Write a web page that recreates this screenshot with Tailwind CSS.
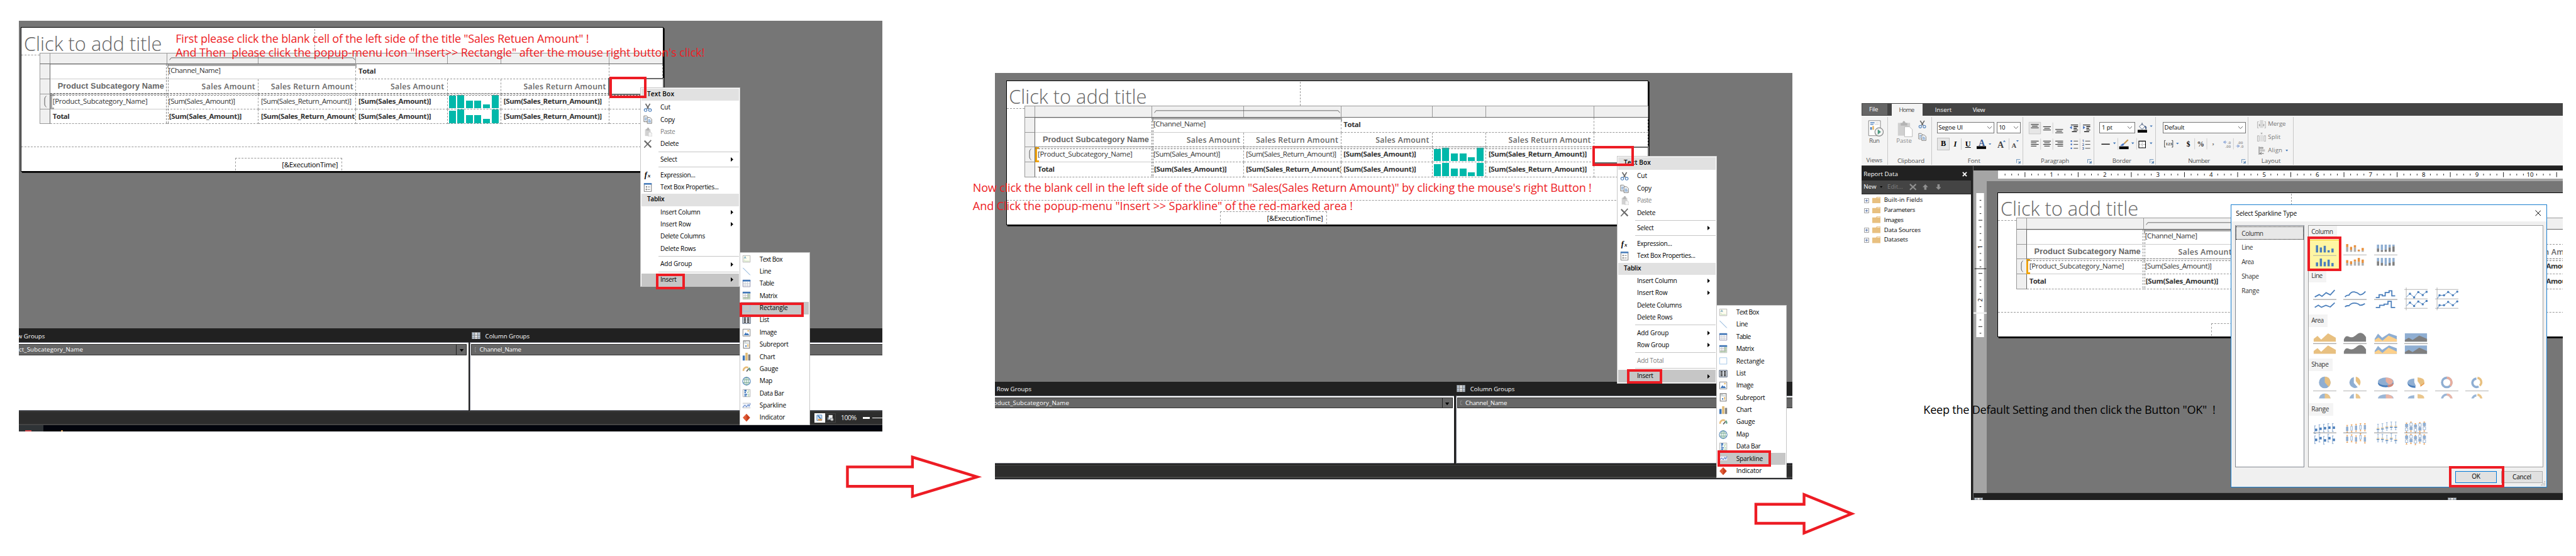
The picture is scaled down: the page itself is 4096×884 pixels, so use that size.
<!DOCTYPE html>
<html lang="en">
<head>
<meta charset="utf-8">
<title>Report Builder sparkline steps</title>
<script src="https://cdn.jsdelivr.net/npm/@tailwindcss/browser@4"></script>
</head>
<body class="bg-white overflow-hidden">
<svg class="hidden">
  <symbol id="i-cut" viewBox="0 0 16 16"><path d="M4 1l5.500 9M12 1L6.500 10" stroke="#696969" stroke-width="2" fill="none"/><circle cx="4" cy="12.500" r="2.500" fill="none" stroke="#4a7ebb" stroke-width="1.300"/><circle cx="12" cy="12.500" r="2.500" fill="none" stroke="#4a7ebb" stroke-width="1.300"/></symbol>
  <symbol id="i-copy" viewBox="0 0 16 16"><path d="M1 1.500h5l2.500 2.500v8H1z" fill="#fff" stroke="#696969"/><path d="M2.500 5h4M2.500 7h3M2.500 9h3" stroke="#4a7ebb"/><path d="M7 4.500h5l3 3v7.500H7z" fill="#fff" stroke="#696969"/><path d="M8.500 8.500h4M8.500 10.500h5M8.500 12.500h5" stroke="#4a7ebb"/></symbol>
  <symbol id="i-paste" viewBox="0 0 16 16"><path d="M3 3h10v12H3z" fill="#d2d2d2"/><path d="M5 2h2V0h3v2h1v3H5z" fill="#b4b4b4"/><path d="M9 8h4l3 3v5H9z" fill="#f4f4f4" stroke="#c4c4c4"/></symbol>
  <symbol id="i-del" viewBox="0 0 16 16"><path d="M2 2l12 12" stroke="#696969" stroke-width="2.600"/><path d="M14 1L1.500 14.500" stroke="#696969" stroke-width="1.800"/></symbol>
  <symbol id="i-fx" viewBox="0 0 16 16"><text x="2" y="12" font-family="Liberation Serif, serif" font-style="italic" font-weight="700" font-size="14">f</text><text x="8" y="13" font-family="Liberation Serif, serif" font-style="italic" font-weight="700" font-size="10">x</text></symbol>
  <symbol id="i-prop" viewBox="0 0 16 16"><path d="M1.500 1h13v14.500h-13z" fill="#fff" stroke="#696969"/><path d="M1 0h14v3H1z" fill="#4a7ebb"/><circle cx="5.500" cy="7" r="1.200" fill="#696969"/><circle cx="5.500" cy="11.500" r="1.100" fill="none" stroke="#696969"/><path d="M8 7h4M8 11.500h4" stroke="#696969"/></symbol>
  <symbol id="i-tb" viewBox="0 0 16 16"><path d="M1.500 1.500h13v12h-13z" fill="#fffdf0" stroke="#b0b0b0"/><path d="M3.500 7l1.800-4 1.800 4M4 5.700h2.500" stroke="#5b9ab5" fill="none" stroke-width=".9"/><path d="M3 9.500h2M3 11.500h10" stroke="#b8d8b0"/></symbol>
  <symbol id="i-line" viewBox="0 0 16 16"><path d="M1.500 1l13 13" stroke="#6fa0d0" stroke-width="1.100"/></symbol>
  <symbol id="i-table" viewBox="0 0 16 16"><path d="M1.500 1.500h13v12h-13z" fill="#fff" stroke="#8a8aa8"/><path d="M1 1h14v3H1z" fill="#3f76b8"/><path d="M2 7.500h12M2 10.500h12M5.500 4v9M9.500 4v9" stroke="#c0c4cc" stroke-width=".9"/></symbol>
  <symbol id="i-matrix" viewBox="0 0 16 16"><path d="M1.500 1.500h13v13h-13z" fill="#fff" stroke="#bbb"/><path d="M10 4h4v10h-4zM2 11h12v3H2z" fill="#bcd8b6"/><path d="M1 1h14v3H1z" fill="#3f76b8"/><path d="M2 7.500h12M2 11h12M5.500 4v10M10 4v10" stroke="#b0b0b0" stroke-width=".9"/></symbol>
  <symbol id="i-rect" viewBox="0 0 16 16"><path d="M1.500 2h13v11.500h-13z" fill="none" stroke="#9cc3e6"/></symbol>
  <symbol id="i-list" viewBox="0 0 16 16"><path d="M1 2h14v12H1z" fill="#eef3fa" stroke="#3a4a63"/><path d="M3 4h4M3 6h4M3 8h4M3 10h4M3 12h4M9 4h4M9 6h4M9 8h4M9 10h4M9 12h4" stroke="#000" stroke-width="1.200"/></symbol>
  <symbol id="i-image" viewBox="0 0 16 16"><path d="M1.500 1.500h13v12.500h-13z" fill="#fff" stroke="#777"/><path d="M3 12.500l3.500-5 2 2.500 1.500-1.500 3 4z" fill="#3f76b8"/><circle cx="11" cy="4.500" r="1.500" fill="#e5b765"/></symbol>
  <symbol id="i-sub" viewBox="0 0 16 16"><path d="M2.500 1h11v13.500h-11z" fill="#fff" stroke="#777" stroke-width="1.200"/><path d="M4 3h3M4 5h8" stroke="#9aa" /><path d="M6 9h2v3H6z" fill="#3f76b8"/><path d="M9.500 7h2v5h-2z" fill="#e5b765"/></symbol>
  <symbol id="i-chart" viewBox="0 0 16 16"><path d="M1 6h4v9H1z" fill="#3f76b8"/><path d="M6 1h4v14H6z" fill="#dfba74"/><path d="M11 4h4v11h-4z" fill="#808080"/></symbol>
  <symbol id="i-gauge" viewBox="0 0 16 16"><path d="M2.500 11a5.500 5.500 0 0 1 8.500-5.500" fill="none" stroke="#e8bd78" stroke-width="3"/><path d="M12.500 5.500q2 2 1.500 5.500" fill="none" stroke="#5fa287" stroke-width="2.500"/><path d="M8 12l4-5" stroke="#555" stroke-width="1.800"/></symbol>
  <symbol id="i-map" viewBox="0 0 16 16"><circle cx="8" cy="8" r="7" fill="#fff" stroke="#4a7ebb" stroke-width="1.200"/><path d="M1.500 5.500h13M1.500 10.500h13M8 1v14" stroke="#69a28a" fill="none"/><ellipse cx="8" cy="8" rx="3.500" ry="7" fill="none" stroke="#69a28a"/></symbol>
  <symbol id="i-bar" viewBox="0 0 16 16"><path d="M1.500 1.500h13v13h-13z" fill="#fff" stroke="#aaa"/><path d="M4 2h4v3H4zM4 6h3v2H4zM4 9h5v2H4zM4 12h4v2H4z" fill="#3f76b8"/><path d="M10 3h3v2h-3zM9 6h3v2H9zM10 9h3v2h-3zM10 12h3v2h-3z" fill="#b9d4b2"/></symbol>
  <symbol id="i-spark" viewBox="0 0 16 16"><path d="M1 3.500h14v8.500H1z" fill="#eef3fb"/><path d="M1 3.500h14M1 12h14" stroke="#bbb"/><path d="M1 11l4-4 3 3 3-4 1.500 3L15 4" fill="none" stroke="#5b7fc4" stroke-width="1.200"/></symbol>
  <symbol id="i-ind" viewBox="0 0 16 16"><path d="M8 1l6.500 7L8 15 1.500 8z" fill="#c8401f"/><path d="M8 1v14L1.500 8z" fill="#e05a35"/></symbol>
  <symbol id="i-grid" viewBox="0 0 16 13"><path d="M0 0h16v13H0z" fill="#777"/><path d="M1 1h4v2H1zM1 4h4v2H1zM1 7h4v2H1zM1 10h4v2H1zM11 1h4v2h-4zM11 4h4v2h-4zM11 7h4v2h-4zM11 10h4v2h-4z" fill="#c5d6e8"/><path d="M6 1h4v2H6zM6 4h4v2H6zM6 7h4v2H6zM6 10h4v2H6z" fill="#fff"/></symbol>
  <symbol id="i-launch" viewBox="0 0 8 8"><path d="M.5 7V.500H7" fill="none" stroke="#5a86b4"/><path d="M3 3l3 3M7.500 3.500v4h-4z" fill="#5a86b4" stroke="#5a86b4" stroke-width=".8"/></symbol>
</svg>

<main id="board" class="relative w-[4650px] h-[1004px] [zoom:0.88086] bg-white overflow-hidden font-['Open_Sans','Noto_Sans',sans-serif] text-[11.500px] text-black whitespace-nowrap">

  <!-- Step 1 -->
  <section class="absolute left-[34px] top-[38px] w-[1559px] h-[741px] overflow-hidden flex flex-col bg-[#767676]">
    <div class="h-[555px] shrink-0 pl-[4px] pt-[11px]" data-surface="gray"></div>
    <div data-groups="one"></div>
  </section>

  <!-- Step 2 -->
  <section class="absolute left-[1796px] top-[132px] w-[1439px] h-[733px] overflow-hidden flex flex-col bg-[#767676]">
    <div class="h-[557px] shrink-0 pl-[20px] pt-[13px]" data-surface="orange"></div>
    <div data-groups="two"></div>
  </section>

  <!-- Step 3 -->
  <section class="absolute left-[3360px] top-[186px] w-[1266px] h-[716px] overflow-hidden flex flex-col bg-white">
    <nav class="h-[23px] shrink-0 bg-[#444] flex items-end text-white leading-[22px] text-[11px]">
      <span class="w-[46px] h-[21px] mb-px ml-px bg-[#666] pl-[13px] leading-[20px]"><b class="font-normal" data-w="16">File</b></span>
      <span class="ml-[8px] w-[56px] h-[22px] bg-[#f4f4f4] text-[#444] pl-[13px]"><b class="font-normal" data-w="27">Home</b></span>
      <span class="ml-[22px]"><b class="font-normal" data-w="30">Insert</b></span>
      <span class="ml-[38px]"><b class="font-normal" data-w="22">View</b></span>
    </nav>
    <div class="h-[91px] shrink-0 bg-[#f4f4f4] border-b border-[#444] flex text-[11px] text-[#555] pt-[2px]">
      <div class="w-[48px] h-[87px] border-r border-[#c8c8c8] flex flex-col items-center">
        <svg class="w-[29px] h-[31px] mt-[6px] ml-[5px]" viewBox="0 0 29 31"><path d="M1 1h22v28H1z" fill="#fff" stroke="#777"/><path d="M4 5h8M4 8h6" stroke="#4a7ebb" stroke-width="1.500"/><path d="M14 5h6M12 8h8" stroke="#c8c8c8"/><path d="M4 13h3v5H4z" fill="#4a7ebb"/><path d="M8 11h3v7H8z" fill="#e5b765"/><circle cx="20.500" cy="22" r="7.800" fill="#f4f4f4" stroke="#8a8a8a" stroke-width="1.400"/><path d="M18 17l6 5-6 5z" fill="#4d9a80"/></svg>
        <span class="leading-[14px] mt-px" data-w="19">Run</span>
        <span class="leading-[16px] mt-[20px]" data-w="29">Views</span>
      </div>
      <div class="w-[79px] h-[87px] border-r border-[#c8c8c8]">
        <div class="flex h-[52px] pl-[16px] pt-[6px]">
          <div class="w-[32px]"><svg class="w-[30px] h-[31px]" viewBox="0 0 30 31"><path d="M2 5h22v23H2z" fill="#d0d0d0"/><path d="M7 5h3q2.500-7 6 0h3v5H7z" fill="#b4b4b4"/><path d="M14 12h9l5 5v13H14z" fill="#fff" stroke="#b4b4b4"/></svg>
            <div class="leading-[14px] text-[#8a8a8a] -ml-px"><span data-w="28">Paste</span></div></div>
          <div class="flex flex-col gap-[8px] pl-[7px]"><svg class="w-[15px] h-[15px]"><use href="#i-cut"/></svg><svg class="w-[15px] h-[15px]"><use href="#i-copy"/></svg></div>
        </div>
        <div class="leading-[16px] mt-[20px] pl-[17px]"><span data-w="49">Clipboard</span></div>
      </div>
      <div class="w-[165px] h-[87px] border-r border-[#c8c8c8] pl-[10px] text-black">
        <div class="flex gap-[4px] pt-[9px]">
          <div class="w-[103px] h-[21px] border border-[#777] bg-white flex items-center justify-between px-px pr-[4px]"><span data-w="44">Segoe UI</span><svg class="w-[8px] h-[5px]" viewBox="0 0 8 5"><path d="M0 0l4 4 4-4" fill="none" stroke="#555"/></svg></div>
          <div class="w-[44px] h-[21px] border border-[#777] bg-white flex items-center justify-between pl-[3px] pr-[4px]"><span data-w="11">10</span><svg class="w-[8px] h-[5px]" viewBox="0 0 8 5"><path d="M0 0l4 4 4-4" fill="none" stroke="#555"/></svg></div>
        </div>
        <div class="flex items-center h-[22px] mt-[8px] font-['Liberation_Serif',serif] font-bold text-[14px]">
          <span class="w-[22px] h-[22px] border border-[#c0c0c0] bg-[#e6e6e6] text-center leading-[20px]">B</span>
          <span class="w-[21px] text-center italic">I</span>
          <span class="w-[24px] border-l border-[#c8c8c8] text-center underline">U</span>
          <svg class="w-[18px] h-[18px] ml-[4px]" viewBox="0 0 18 18"><text x="3.500" y="12" font-size="16" font-weight="700" fill="#3f5f95">A</text><path d="M0 13h17v5H0z"/></svg>
          <svg class="w-[5px] h-[3px] ml-[4px]" viewBox="0 0 6 4"><path d="M0 0h6L3 4z" fill="#4a7ebb"/></svg>
          <svg class="w-[16px] h-[16px] ml-[11px]" viewBox="0 0 16 16"><text x="0" y="15" font-size="16" font-weight="700" fill="#444">A</text><path d="M10 4l2.500-3L15 4z" fill="#3f76b8"/></svg>
          <svg class="w-[20px] h-[20px] ml-[4px] border-l border-[#c8c8c8] pl-[4px]" viewBox="0 0 16 16"><text x="0" y="16" font-size="13" font-weight="700" fill="#444">A</text><path d="M9 1h5l-2.500 3z" fill="#3f76b8"/></svg>
        </div>
        <div class="flex justify-between items-center leading-[16px] mt-[12px] pl-[55px] pr-[3px] text-[#555]"><span data-w="23">Font</span><svg class="w-[8px] h-[8px]"><use href="#i-launch"/></svg></div>
      </div>
      <div class="w-[128px] h-[87px] border-r border-[#c8c8c8]">
        <svg class="block w-[128px] h-[72px]" viewBox="0 0 128 72" fill="none">
          <path d="M10.500 9.500h21v21h-21z" fill="#e6e6e6" stroke="#c4c4c4"/>
          <path d="M53.500 10v20M31.500 39v20M53.500 39v20M102.500 10v20M102.500 39v20" stroke="#c8c8c8"/>
          <path d="M14 13.500h14M16 16.500h10M14 19.500h14M36 17.500h14M38 20.500h10M36 23.500h14M58 22.500h14M60 25.500h10M58 28.500h14" stroke="#000"/>
          <path d="M14 43.500h14M14 46.500h10M14 49.500h14M14 52.500h10M36 43.500h14M38 46.500h10M36 49.500h14M38 52.500h10M58 43.500h14M62 46.500h10M58 49.500h14M62 52.500h10" stroke="#000"/>
          <path d="M86 14.500h13M91 17.500h8M91 20.500h6M91 23.500h8M88 26.500h9M108 14.500h13M114 17.500h7M114 20.500h5M114 23.500h7M110 26.500h9" stroke="#000" stroke-width="1.300"/>
          <path d="M84 19l4-3v6zM112 19l-4-3v6z" fill="#4472c4"/>
          <path d="M91 43.500h8M91 49.500h8M91 56.500h8M112 43.500h9M112 49.500h9M112 56.500h9" stroke="#333"/>
          <circle cx="87" cy="43.500" r="1.500" fill="#4472c4"/><circle cx="87" cy="49.500" r="1.500" fill="#4472c4"/><circle cx="87" cy="56.500" r="1.500" fill="#4472c4"/>
          <g fill="#3f5f95" font-size="6" font-weight="700"><text x="106.500" y="45">1</text><text x="106.500" y="52">2</text><text x="106.500" y="59">3</text></g>
        </svg>
        <div class="flex justify-between items-center leading-[16px] pl-[32px] pr-[3px]"><span data-w="51">Paragraph</span><svg class="w-[8px] h-[8px]"><use href="#i-launch"/></svg></div>
      </div>
      <div class="w-[112px] h-[87px] border-r border-[#c8c8c8] text-black">
        <div class="flex items-center pl-[10px] pt-[9px]">
          <div class="w-[64px] h-[21px] border border-[#777] bg-white flex items-center justify-between pl-[3px] pr-[4px]"><span data-w="19">1 pt</span><svg class="w-[8px] h-[5px]" viewBox="0 0 8 5"><path d="M0 0l4 4 4-4" fill="none" stroke="#555"/></svg></div>
          <svg class="w-[30px] h-[18px] ml-[5px]" viewBox="0 0 30 18"><path d="M0 13h17v5H0z"/><path d="M3 7l5-5 5 5-5 5z" fill="#fff" stroke="#3a4f72"/><path d="M8 5V0M13 6q4 1 2 6z" stroke="#3a4f72" fill="#4472c4"/><path d="M22 5h5l-2.500 3z" fill="#3f76b8"/></svg>
        </div>
        <svg class="block w-[112px] h-[30px] mt-[4px]" viewBox="0 0 112 30"><path d="M13 15.500h15M76.500 4v21M42.500 4v21" stroke="#c8c8c8" fill="none"/><path d="M13 15h15" stroke="#000" stroke-width="1.500"/><path d="M34 12h5l-2.500 3zM67 12h5l-2.500 3zM100 12h5l-2.500 3z" fill="#3f76b8"/><path d="M45 19h17v5H45z"/><path d="M47 18q4-6 8-4l-3 4z" fill="#4472c4"/><path d="M54 14l7-7" stroke="#c79a55" stroke-width="2.500"/><path d="M80.500 9.500h12v12h-12z" fill="#fff" stroke="#000" stroke-width="1.200"/><path d="M86.500 11v10M82 15.500h10" stroke="#333" stroke-dasharray="1 2"/></svg>
        <div class="flex justify-between items-center leading-[16px] mt-[8px] pl-[33px] pr-[3px] text-[#555]"><span data-w="34">Border</span><svg class="w-[8px] h-[8px]"><use href="#i-launch"/></svg></div>
      </div>
      <div class="w-[166px] h-[87px] border-r border-[#c8c8c8] pl-[12px] text-black">
        <div class="w-[150px] h-[21px] mt-[9px] border border-[#777] bg-white flex items-center justify-between pl-[2px] pr-[4px]"><span data-w="36">Default</span><svg class="w-[8px] h-[5px]" viewBox="0 0 8 5"><path d="M0 0l4 4 4-4" fill="none" stroke="#555"/></svg></div>
        <svg class="block w-[152px] h-[22px] mt-[8px]" viewBox="0 0 152 22"><path d="M5 5H3v12h2M16 5h2v12h-2" fill="none" stroke="#333"/><g font-family="Liberation Serif, serif" font-weight="700"><text x="5" y="14" font-size="8" fill="#333">123</text><text x="43" y="16" font-size="13">$</text><text x="62" y="16" font-size="13" fill="#333">%</text><text x="89" y="13" font-size="14" fill="#777">,</text></g><path d="M24 9h5l-2.500 3z" fill="#3f76b8"/><path d="M57.500 1v20M79.500 1v20M127.500 1v20" stroke="#c8c8c8"/><g font-family="Liberation Sans, sans-serif" font-weight="700" font-size="7" fill="#999"><text x="117" y="11">.0</text><text x="113" y="18">.00</text><text x="135" y="11">.00</text><text x="140" y="18">.0</text></g><path d="M109 8l4-2.500v5zM112 8h4M139 15l-4-2.500v5zM132 15h4" fill="#9db3dc" stroke="#9db3dc"/></svg>
        <div class="flex justify-between items-center leading-[16px] mt-[12px] pl-[46px] pr-[3px] text-[#555]"><span data-w="39">Number</span><svg class="w-[8px] h-[8px]"><use href="#i-launch"/></svg></div>
      </div>
      <div class="w-[82px] h-[87px] border-r border-[#c8c8c8] pl-[16px] text-[#777]">
        <div class="flex items-center h-[24px] mt-px gap-[4px]"><svg class="w-[16px] h-[15px]" viewBox="0 0 16 15"><path d="M5 0h6v14H5z" fill="#d8d8d8"/><path d="M3 3H.500v11H3M13 3h2.500v11H13" fill="none" stroke="#aaa"/><path d="M3 6l3 3-3 3zM13 6l-3 3 3 3z" fill="#aaa"/></svg><span data-w="32">Merge</span></div>
        <div class="flex items-center h-[24px] gap-[4px]"><svg class="w-[16px] h-[16px]" viewBox="0 0 16 16"><path d="M6 0h4L8 3z" fill="#aaa"/><path d="M.5 5.500h3v10h-3zM12.500 5.500h3v10h-3z" fill="none" stroke="#aaa"/><path d="M5 4h6v12H5z" fill="#e0e0e0"/></svg><span data-w="23">Split</span></div>
        <div class="flex items-center h-[24px] gap-[4px]"><svg class="w-[16px] h-[15px]" viewBox="0 0 16 15"><path d="M3.500 0v15" stroke="#555"/><path d="M5.500 1.500h5v2h-5z" fill="none" stroke="#777"/><path d="M5 5h9v4H5z" fill="#c4c4c4"/><path d="M5 12.500h7M8 10l-3 2.500L8 15" stroke="#555" fill="none"/></svg><span data-w="26">Align</span><svg class="w-[5px] h-[3px] ml-[2px]" viewBox="0 0 6 4"><path d="M0 0h6L3 4z" fill="#3f76b8"/></svg></div>
        <div class="leading-[16px] pl-[8px] -mt-[1px] text-[#555]"><span data-w="35">Layout</span></div>
      </div>
    </div>

    <div class="flex h-[602px] shrink-0">
      <aside class="w-[198px] text-[11px]">
        <div class="h-[26px] bg-[#212121] text-white flex items-center justify-between pl-[4px] pr-[7px] pt-[3px]"><span data-w="62">Report Data</span><svg class="w-[9px] h-[9px]" viewBox="0 0 9 9"><path d="M1 1l7 7M8 1L1 8" stroke="#fff" stroke-width="2"/></svg></div>
        <div class="h-[25px] bg-[#444] border-b border-[#222] text-white flex items-center pl-[4px]"><span data-w="23">New</span><svg class="w-[5px] h-[3px] ml-[6px]" viewBox="0 0 6 4"><path d="M0 0h6L3 4z"/></svg><span class="ml-[9px] text-[#808080]" data-w="28">Edit...</span>
          <svg class="w-[13px] h-[12px] ml-[12px]" viewBox="0 0 13 12"><path d="M1 1l11 10M12 1L1 11" stroke="#909090" stroke-width="2.400"/></svg>
          <svg class="w-[10px] h-[10px] ml-[11px]" viewBox="0 0 10 10"><path d="M5 0l5 5H7v5H3V5H0z" fill="#909090"/></svg>
          <svg class="w-[10px] h-[10px] ml-[13px]" viewBox="0 0 10 10"><path d="M5 10l5-5H7V0H3v5H0z" fill="#909090"/></svg></div>
        <div id="tree" class="pt-px"></div>
      </aside>
      <div class="w-[4px] bg-[#212121] border-r border-[#666]"></div>
      <div class="w-[1064px] flex flex-col">
        <div class="h-[8px] shrink-0 bg-[#212121]"></div>
        <div class="h-[19px] shrink-0 bg-[#a5a5a5] pl-[45px]"><svg id="hruler" class="block w-[1019px] h-[14px] bg-white" viewBox="0 0 1019 14"></svg></div>
        <div class="flex h-[563px] shrink-0">
          <div class="w-[24px] shrink-0 bg-[#a5a5a5] pt-[21px]"><svg id="vruler" class="block w-[24px] h-[260px]" viewBox="0 0 24 260"></svg></div>
          <div class="w-[1040px] pl-[20px] pt-[20px] bg-[#767676] border-b border-[#666] overflow-hidden" data-surface="orange"></div>
        </div>
        <div class="h-[12px] shrink-0 bg-[#212121] pl-[2px] pt-[8px] flex gap-[839px] overflow-hidden"><svg class="w-[16px] h-[13px]"><use href="#i-grid"/></svg><svg class="w-[16px] h-[13px]"><use href="#i-grid"/></svg></div>
      </div>
    </div>
  </section>

  <!-- Selected cells -->
  <div class="absolute left-[1098px] top-[141px] w-[101px] h-[31px] border-[3px] border-[#696969] bg-white"></div>
  <div class="absolute left-[2876px] top-[264px] w-[101px] h-[31px] border-[3px] border-[#696969] bg-white"></div>

  <!-- Context menus -->
  <div class="absolute left-[1156px] top-[158px] w-[180px] h-[360px] bg-white border border-[#c6c6c6] p-px" data-menu="one"></div>
  <div class="absolute left-[1335px] top-[455px] w-[127px] h-[312px] bg-white border border-[#c6c6c6] p-px" data-submenu="Rectangle"></div>
  <div class="absolute left-[2919px] top-[282px] w-[180px] h-[410px] bg-white border border-[#c6c6c6] p-px" data-menu="two"></div>
  <div class="absolute left-[3098px] top-[551px] w-[127px] h-[312px] bg-white border border-[#c6c6c6] p-px" data-submenu="Sparkline"></div>

  <!-- Sparkline dialog -->
  <div class="absolute left-[4027px] top-[369px] w-[571px] h-[511px] border border-[#1a7fd0] bg-[#f0f0f0] flex flex-col">
    <div class="h-[30px] shrink-0 bg-white flex items-center justify-between pl-[8px] pr-[10px]"><span data-w="110">Select Sparkline Type</span><svg class="w-[11px] h-[11px]" viewBox="0 0 11 11"><path d="M.5.500l10 10M10.500.500l-10 10" stroke="#000" stroke-width="1.100"/></svg></div>
    <div class="flex gap-[6px] pl-[6px] pt-[6px] text-[#333]">
      <div class="w-[126px] h-[437px] border border-[#828790] bg-white p-px pt-px">
        <div class="h-[24px] bg-[#e8e8e8] border border-dotted border-black leading-[23px] pl-[9px] mb-[3px]"><span data-w="39">Column</span></div>
        <div class="h-[26px] leading-[24px] pl-[10px]"><span data-w="20">Line</span></div>
        <div class="h-[26px] leading-[24px] pl-[10px]"><span data-w="22">Area</span></div>
        <div class="h-[26px] leading-[24px] pl-[10px]"><span data-w="31">Shape</span></div>
        <div class="h-[26px] leading-[24px] pl-[10px]"><span data-w="32">Range</span></div>
      </div>
      <div id="gallery" class="w-[425px] h-[437px] border border-[#a0a0a0] bg-white"></div>
    </div>
    <div class="flex justify-end gap-[8px] pr-[7px] pt-[7px] text-black">
      <div class="w-[75px] h-[22px] border-2 border-[#0078d7] bg-[#e1e1e1] text-center leading-[18px]"><span data-w="15">OK</span></div>
      <div class="w-[75px] h-[22px] border border-[#adadad] bg-[#e1e1e1] text-center leading-[20px]"><span data-w="34">Cancel</span></div>
    </div>
    <svg class="absolute right-[2px] bottom-[2px] w-[8px] h-[8px]" viewBox="0 0 8 8"><path d="M6 0h2v2H6zM3 3h2v2H3zM6 3h2v2H6zM0 6h2v2H0zM3 6h2v2H3zM6 6h2v2H6z" fill="#bbb"/></svg>
  </div>

  <!-- Red marks -->
  <div class="absolute left-[1100px] top-[139px] w-[67px] h-[38px] border-[5px] border-[#ed1c24]"></div>
  <div class="absolute left-[1184px] top-[494px] w-[52px] h-[28px] border-[5px] border-[#ed1c24]"></div>
  <div class="absolute left-[1335px] top-[546px] w-[116px] h-[26px] border-[5px] border-[#ed1c24]"></div>
  <div class="absolute left-[2874px] top-[263px] w-[75px] h-[37px] border-[5px] border-[#ed1c24]"></div>
  <div class="absolute left-[2937px] top-[666px] w-[64px] h-[27px] border-[5px] border-[#ed1c24]"></div>
  <div class="absolute left-[3100px] top-[813px] w-[97px] h-[29px] border-[5px] border-[#ed1c24]"></div>
  <div class="absolute left-[4165px] top-[427px] w-[62px] h-[62px] border-[5px] border-[#ed1c24]"></div>
  <div class="absolute left-[4421px] top-[841px] w-[100px] h-[39px] border-[5px] border-[#ed1c24]"></div>
  <svg class="absolute left-[1520px] top-[815px] w-[260px] h-[90px]" viewBox="1520 815 260 90"><path d="M1529.600 842.700H1647V825L1763.800 860.700 1647 896V877.700H1529.600z" fill="none" stroke="#ed1c24" stroke-width="5"/></svg>
  <svg class="absolute left-[3160px] top-[880px] w-[200px] h-[90px]" viewBox="3160 880 200 90"><path d="M3169 910.300H3256V892.700L3342 927.500 3256 962.300V944.700H3169z" fill="none" stroke="#ed1c24" stroke-width="5"/></svg>

  <!-- Instructions -->
  <p class="absolute left-[317px] top-[59px] text-[20.500px] leading-none text-[#ed1c24]"><span data-w="746">First please click the blank cell of the left side of the title "Sales Retuen Amount" !</span></p>
  <p class="absolute left-[317px] top-[84px] text-[20.500px] leading-none text-[#ed1c24]"><span data-w="955">And Then&nbsp; please click the popup-menu Icon "Insert&gt;&gt; Rectangle" after the mouse right button's click!</span></p>
  <p class="absolute left-[1756px] top-[328px] text-[20.500px] leading-none text-[#ed1c24]"><span data-w="1117">Now click the blank cell in the left side of the Column "Sales(Sales Return Amount)" by clicking the mouse's right Button !</span></p>
  <p class="absolute left-[1756px] top-[361px] text-[20.500px] leading-none text-[#ed1c24]"><span data-w="686">And Click the popup-menu "Insert &gt;&gt; Sparkline" of the red-marked area !</span></p>
  <p class="absolute left-[3472px] top-[729px] text-[20.500px] leading-none text-black"><span data-w="527">Keep the Default Setting and then click the Button "OK"&nbsp; !</span></p>
</main>

<script>
const $$ = (s) => [...document.querySelectorAll(s)];
const t = (text, w) => `<span data-w="${w}">${text}</span>`;

/* Report design surface: title, tablix, footer */
const bars = `<div class="flex items-end gap-[3px] pl-[2px] h-[25px]">
  ${[22, 24, 14, 14, 7, 24].map(h => `<i class="block w-[12.500px] bg-[#00b8aa]" style="height:${h}px"></i>`).join('')}</div>`;
function surface(kind) {
  const mark = kind === 'orange'
    ? '<i class="absolute -left-px top-0 w-[7px] h-[27px] border-l-[4px] border-y-[4px] border-[#f0a30a]"></i>'
    : '<i class="absolute left-0 top-0 w-[7px] h-[27px] border-l-[4px] border-y-[4px] border-[#a8a8a8]"></i>';
  const head = '<div class="border-r border-[#999] bg-[#f0f0f0]"></div>';
  const rowHead = (x = '') => `<div class="border-l border-b border-[#999] border-r border-r-[#666] bg-[#f0f0f0]">${x}</div>`;
  return `<div class="w-[1160px] h-[261px] bg-white border border-black shadow-[2px_2px_0_0_#000]">
    <div class="relative h-[45px] pl-[4px] pt-[11px]">
      <span class="block w-max text-[35px] font-light leading-none text-[#666]" data-w="249">Click to add title</span>
      <i class="absolute left-[529px] top-[2px] h-[43px] border-l border-dashed border-[#999]"></i>
      <i class="absolute left-0 top-[49px] w-[32px] border-t border-dashed border-[#999]"></i>
    </div>
    <div class="relative ml-[32px] grid grid-cols-[20px_211px_165px_176px_165px_97px_195px_97px] grid-rows-[21px_27px_27px_27px_27px] text-[13px] leading-[24px] text-[#333]">
      <div class="col-span-8 grid grid-cols-subgrid border-t border-t-[#999] border-b-2 border-b-[#666] border-l border-l-[#999]">${head.repeat(8)}</div>
      ${rowHead()}
      <div class="border-b border-[#ccc] border-t"></div>
      <div class="col-span-2 border-b border-b-[#ccc] border-r border-r-[#999] [border-right-style:dashed] pl-[2px] leading-[26px] -mt-px">${t('[Channel_Name]', 94)}</div>
      <div class="col-span-3 border-b border-r border-dashed border-[#999] pl-[4px] font-bold">${t('Total', 31)}</div>
      <div class="border-b border-r border-dashed border-[#999]"></div>

      ${rowHead()}
      <div class="border-b border-[#999] font-bold text-[#666] font-['Liberation_Sans',sans-serif] text-[14.500px] text-right pr-[6px]">${t('Product Subcategory Name', 192)}</div>
      <div class="border-b border-r border-dashed border-[#999] font-semibold text-[#666] text-[14px] leading-[27px] text-right pr-[5px]">${t('Sales Amount', 97)}</div>
      <div class="border-b border-r border-dashed border-[#999] font-semibold text-[#666] text-[14px] leading-[27px] text-right pr-[4px]">${t('Sales Return Amount', 149)}</div>
      <div class="border-b border-r border-dashed border-[#999] font-semibold text-[#666] text-[14px] leading-[27px] text-right pr-[5px]">${t('Sales Amount', 97)}</div>
      <div class="border-b border-r border-dashed border-[#999]"></div>
      <div class="border-b border-r border-dashed border-[#999] font-semibold text-[#666] text-[14px] leading-[27px] text-right pr-[5px]">${t('Sales Return Amount', 149)}</div>
      <div class="border-b border-r border-dashed border-[#999]"></div>

      ${rowHead('<svg class="w-[18px] h-[26px]" viewBox="0 0 18 26"><path d="M11 3Q8 5 8 8v10q0 3 3 5" fill="none" stroke="#444"/></svg>')}
      <div class="relative border-b border-[#ccc] pl-[4px]">${mark}${t('[Product_Subcategory_Name]', 171)}</div>
      <div class="border-b border-r border-dashed border-[#999] pl-[2px]">${t('[Sum(Sales_Amount)]', 120)}</div>
      <div class="border-b border-r border-dashed border-[#999] pl-[4px]">${t('[Sum(Sales_Return_Amount)]', 163)}</div>
      <div class="border-b border-r border-dashed border-[#999] pl-[4px] font-bold">${t('[Sum(Sales_Amount)]', 131)}</div>
      <div class="border-b border-r border-dashed border-[#999]">${bars}</div>
      <div class="border-b border-r border-dashed border-[#999] pl-[4px] font-bold">${t('[Sum(Sales_Return_Amount)]', 177)}</div>
      <div class="border-b border-r border-dashed border-[#999]"></div>

      ${rowHead()}
      <div class="border-b border-dashed border-[#999] pl-[4px] font-bold">${t('Total', 30)}</div>
      <div class="border-b border-r border-dashed border-[#999] pl-[3px] font-bold">${t('[Sum(Sales_Amount)]', 131)}</div>
      <div class="border-b border-r border-dashed border-[#999] pl-[4px] font-bold overflow-hidden">${t('[Sum(Sales_Return_Amount)]', 177)}</div>
      <div class="border-b border-r border-dashed border-[#999] pl-[4px] font-bold">${t('[Sum(Sales_Amount)]', 131)}</div>
      <div class="border-b border-r border-dashed border-[#999]">${bars}</div>
      <div class="border-b border-r border-dashed border-[#999] pl-[4px] font-bold">${t('[Sum(Sales_Return_Amount)]', 177)}</div>
      <div class="border-b border-r border-dashed border-[#999]"></div>

      <svg class="absolute left-[234px] top-[8px] w-[336px] h-[6px]" viewBox="0 0 336 6"><path d="M.5 5l3-4h329l3 4" fill="none" stroke="#555"/></svg>
      <i class="absolute left-[231px] top-[21px] w-[342px] h-[7px] border-t-[4px] border-x-[3px] border-[#a8a8a8]"></i>
      <i class="absolute left-[229px] top-[21px] w-[4px] h-[106px] border-x border-dashed border-[#888]"></i>
      <i class="absolute left-[20px] top-[73px] w-[1106px] h-[5px] border-y border-dashed border-[#777]"></i>
    </div>
    <div class="h-[42px] border-b border-dashed border-[#999]"></div>
    <div class="pt-[19px] pl-[385px]"><div class="w-[193px] h-[23px] border border-b-0 border-dashed border-[#999] text-right pr-[6px] leading-[23px] text-[13px] text-black">${t('[&amp;ExecutionTime]', 101)}</div></div>
  </div>`;
}
$$('[data-surface]').forEach(e => e.innerHTML = surface(e.dataset.surface));

/* Row and column groups pane with the status bar */
$$('[data-groups]').forEach(e => {
  const one = e.dataset.groups === 'one';
  const indent = one
    ? ['-ml-[16px] w-[833px]', '-ml-[32px]', 'relative w-[811.500px] mr-[3px] bg-white border-y border-[#777a85] pt-[2px]']
    : ['ml-[3px] w-[830px]', '-ml-[14px]', 'relative w-[829px] mr-[3px] bg-white border-y border-[#777a85] pt-[2px]'];
  e.innerHTML = `
    <div class="h-[25px] bg-[#212121] text-white text-[11px] flex items-center pt-[4px]">
      <span class="${indent[0]}">${t('Row Groups', 63)}</span>
      <svg class="w-[16px] h-[13px] mb-[4px]"><use href="#i-grid"/></svg><span class="ml-[9px]">${t('Column Groups', 80)}</span>
    </div>
    <div class="h-[123px] bg-[#212121] flex text-white text-[11px] leading-[18px]">
      <div class="${indent[2]}">
        <div class="h-[20px] bg-[#666] border-y border-[#333] mr-[3px] flex justify-between">
          <span class="${indent[1]}">${t('Product_Subcategory_Name', 148)}</span>
          <span class="w-[19px] border-x border-[#222] flex items-center justify-center"><svg class="w-[7px] h-[5px] mt-[3px]" viewBox="0 0 7 5"><path d="M0 0h7L3.500 5z"/></svg></span>
        </div>
      </div>
      <div class="flex-1 bg-white border-y border-[#777a85] border-l pt-[2px] pl-px">
        <div class="h-[20px] bg-[#666] border-y border-l border-[#333] pl-[5px] flex items-center gap-[6px]"><i class="w-[3px] h-[9px] border border-r-0 border-[#888]"></i>${t('Channel_Name', 75)}</div>
      </div>
    </div>
    <div class="h-[3px] bg-[#212121] border-b border-[#444]"></div>
    <div class="h-[21px] bg-[#2d2d2d] text-[#eee] text-[12px] flex items-center">
      ${one ? `<span class="ml-[1436px] w-[19px] h-[17px] bg-white flex items-center justify-center"><svg class="w-[12px] h-[12px]" viewBox="0 0 12 12"><path d="M1 1h9v10H1z" fill="#cfe0f0" stroke="#4a7ebb"/><path d="M3 8h7v3H3z" fill="#e59a4a"/><path d="M3 2l5 6" stroke="#3f76b8" stroke-width="2"/></svg></span>
      <span class="w-[20px] h-[17px] border border-[#444] flex items-center justify-center"><svg class="w-[12px] h-[12px]" viewBox="0 0 12 12"><path d="M3 1h7v8H3z" fill="#eee"/><path d="M1 5h2v5H1zM5 6h2v4H5z" fill="#9ab"/><circle cx="9" cy="9" r="2.500" fill="#ddd" stroke="#777"/></svg></span>
      <span class="ml-[9px]">${t('100%', 28)}</span><i class="ml-[12px] w-[12px] h-[4px] bg-white"></i><i class="ml-[5px] w-[18px] h-[2px] bg-white"></i>` : ''}
    </div>
    <div class="h-[3px] bg-[#444]"></div>
    <div class="h-[11px] bg-[#02040c] flex">${one ? '<i class="w-[44px] h-[11px] bg-[#2f3336] pl-[11px] pt-[8px]"><i class="block w-[12px] h-[3px] bg-[#d0464a]"></i></i><i class="block ml-[32px] mt-[8px] w-[4px] h-[3px] bg-[#c99858]"></i>' : ''}</div>`;
});

/* Context menus */
const arrow = '<svg class="w-[5px] h-[8px] mr-[10px]" viewBox="0 0 5 8"><path d="M0 0l4.500 4L0 8z"/></svg>';
const row = (label, w, o = {}) => `<div class="${o.hot ? 'h-[22px] flex items-center bg-[#c6c6c6]' : o.off ? 'h-[22px] flex items-center text-[#808080]' : 'h-[22px] flex items-center'}">
  <span class="w-[34px] pl-[3px]">${o.icon ? `<svg class="w-[16px] h-[16px]"><use href="#i-${o.icon}"/></svg>` : ''}</span><span class="flex-1 leading-[20px]">${t(label, w)}</span>${o.sub ? arrow : ''}</div>`;
const sep = '<div class="h-[6px] pt-[2px] pl-[31px] pr-0"><div class="border-t border-[#c6c6c6]"></div></div>';
const title = (label, w) => `<div class="h-[22px] bg-[#e1e1e1] font-semibold pl-[10px] leading-[20px]">${t(label, w)}</div>`;
$$('[data-menu]').forEach(e => {
  const two = e.dataset.menu === 'two';
  e.innerHTML = title('Text Box', 49) + '<div class="h-px"></div>' + row('Cut', 18, {icon: 'cut'}) + row('Copy', 26, {icon: 'copy'}) +
    row('Paste', 26, {icon: 'paste', off: 1}) + row('Delete', 33, {icon: 'del'}) + sep + row('Select', 30, {sub: 1}) + sep +
    row('Expression...', 63, {icon: 'fx'}) + row('Text Box Properties...', 105, {icon: 'prop'}) + '<div class="h-px"></div>' + title('Tablix', 31) +
    row('Insert Column', 72, {sub: 1}) + row('Insert Row', 55, {sub: 1}) + row('Delete Columns', 80.5) + row('Delete Rows', 64) + sep +
    row('Add Group', 57, {sub: 1}) + (two ? row('Row Group', 58, {sub: 1}) + sep + row('Add Total', 48, {off: 1}) : '') + sep + row('Insert', 29, {sub: 1, hot: 1});
});
const inserts = [['Text Box', 41, 'tb'], ['Line', 21, 'line'], ['Table', 26, 'table'], ['Matrix', 32, 'matrix'], ['Rectangle', 51, 'rect'], ['List', 17, 'list'], ['Image', 31, 'image'], ['Subreport', 52, 'sub'], ['Chart', 28, 'chart'], ['Gauge', 34, 'gauge'], ['Map', 23, 'map'], ['Data Bar', 44, 'bar'], ['Sparkline', 48, 'spark'], ['Indicator', 46, 'ind']];
$$('[data-submenu]').forEach(e => e.innerHTML = inserts.map(([l, w, icon]) => row(l, w, {icon, hot: l === e.dataset.submenu})).join(''));

/* Report data tree */
document.getElementById('tree').innerHTML = [['Built-in Fields', 70, 1], ['Parameters', 56, 1], ['Images', 35, 0], ['Data Sources', 66, 1], ['Datasets', 43, 1]].map(([l, w, plus]) =>
  `<div class="h-[18px] flex items-center pl-[5px]"><span class="w-[15px]">${plus ? '<svg class="w-[9px] h-[9px] mt-[2px]" viewBox="0 0 9 9"><path d="M.5.500h8v8h-8z" fill="#fff" stroke="#919191"/><path d="M2 4.500h5M4.500 2v5" stroke="#3b5a9a"/></svg>' : ''}</span>
   <svg class="w-[15px] h-[12px]" viewBox="0 0 15 12"><path d="M0 2h7l1-2h7v12H0z" fill="#e8c080"/><path d="M9 1.500h5" stroke="#fff"/></svg><span class="ml-[6px] leading-[18px]">${t(l, w)}</span></div>`).join('');

/* Rulers */
let h = '';
for (let i = 1; i < 85; i++) {
  const x = i * 12 + .5;
  if (i % 8 === 0) h += `<text x="${x}" y="11.5" font-size="11" text-anchor="middle">${i / 8}</text>`;
  else h += i % 4 === 0 ? `<path d="M${x} 3v9" stroke="#000"/>` : `<path d="M${x} 6v3" stroke="#000"/>`;
}
document.getElementById('hruler').innerHTML = h;
let v = '<path d="M5 0h14v260H5z" fill="#fff"/>';
for (let i = 1; i < 22; i++) {
  const y = i * 12 + 1;
  if (i === 18) continue;
  if (i % 8 === 0) v += `<text transform="translate(16 ${y}) rotate(-90)" font-size="11" text-anchor="middle">${i / 8}</text>`;
  else v += i % 4 === 0 ? `<path d="M9 ${y}h7" stroke="#000"/>` : `<path d="M11 ${y}h3" stroke="#000"/>`;
}
v += '<path d="M2 136.500h21" stroke="#000"/><path d="M0 215h24v3H0z" fill="#eee"/>';
document.getElementById('vruler').innerHTML = v;

/* Sparkline gallery, every tile drawn in a 42 x 54 box */
const xs = [5, 12, 19, 26, 33], B = '#4a7ebb', L = '#8faed2', G = '#7f7f7f', O = '#e8923f', Y = '#e8c080', P = '#e8ae9e';
const r = (x, y, w, hh, f) => `<rect x="${x}" y="${y}" width="${w}" height="${hh}" fill="${f}"/>`;
const base = (y, c = G) => r(0, y, 42, 1, c);
const stack = (top, split, bottom, a, b) => xs.map((x, i) => r(x, top[i], 4, split[i] - top[i], a) + r(x, split[i], 4, bottom - split[i], b)).join('');
const ln = (d, w = 2) => `<path d="${d}" fill="none" stroke="${B}" stroke-width="${w}"/>`;
const axes = '<path d="M3.500 7v41M0 10.500h42M0 27.500h42M0 44.500h42" stroke="#aaa" fill="none"/>';
const pts = (p, round) => ln('M4 ' + (p[0][1] + 6) + 'L' + p.map(q => q.join(' ')).join('L'), 1) + p.map(([x, y]) => round ? `<circle cx="${x}" cy="${y}" r="2" fill="${B}"/>` : r(x - 1.5, y - 1.5, 3.5, 3.5, B)).join('');
const poly = (d, f) => `<path d="${d}" fill="${f}"/>`;
const twice = (s, dy) => s + `<g transform="translate(0 ${dy})">${s}</g>`;
const mount = 'M1 24V19L8 13.700 14.500 20.300 27 9 41 17V24z';
const smooth = 'M1 24V20Q4 12 10 15T22 13Q33 2 41 16V24z';
const pie = (a, b) => `<circle cx="21" cy="18.300" r="10.500" fill="${a}"/><path d="M21 18.300V7.800A10.500 10.500 0 0 1 28 26z" fill="${b}"/>`;
const half = s => s + base(33, '#aaa') + `<svg x="0" y="38" width="42" height="9" viewBox="0 7.800 42 9"><g opacity=".9">${s}</g></svg>`;
const split = `<path d="M19 8.500A10 10 0 1 0 26 27L19 19z" fill="${L}"/><path d="M22.500 8A10 10 0 0 1 29 24L22.500 16z" fill="${Y}"/>`;
const pie3 = `<ellipse cx="21" cy="19.500" rx="14" ry="7.500" fill="${B}"/><path d="M21 20h14q0 6-9 7z" fill="#cf8577"/><ellipse cx="21" cy="16.500" rx="14" ry="7" fill="${L}"/><path d="M21 16.500V9.500a14 7 0 0 1 6 13z" fill="${P}"/>`;
const pie4 = `<path d="M6 17v4q2 7 14 7v-4z" fill="${B}"/><path d="M18 11Q6 12 6 18t15 7l-3-7z" fill="${L}"/><path d="M36 17v4l-7 5v-4z" fill="${O}"/><path d="M24 9q12 1 12 7t-7 7l-5-7z" fill="${Y}"/>`;
const ring = `<circle cx="21" cy="18.300" r="8.500" fill="none" stroke="${L}" stroke-width="4"/><path d="M21 9.800a8.500 8.500 0 0 1 6 14.500" fill="none" stroke="${P}" stroke-width="4"/>`;
const ring2 = `<path d="M20 11.500a7.500 7.500 0 1 0 4 14" fill="none" stroke="${L}" stroke-width="4"/><path d="M22 10a8 8 0 0 1 4 14" fill="none" stroke="${Y}" stroke-width="4"/>`;
const stems = (ys, kind) => ys.map((y, i) => {
  const x = 3 + i * 8;
  if (kind === 0) return `<path d="M${x} ${y}v14M${x - 1} ${y}h3M${x - 1} ${y + 14}h3" stroke="${L}" fill="none" stroke-width="1.200"/>` + r(x + .5, y + 5, 4, 4.5, B);
  if (kind === 1) return `<path d="M${x + 5} ${y}v13M${x + 3.5} ${y}h3M${x + 3.5} ${y + 13}h3" stroke="${O}" fill="none"/><rect x="${x + 3.5}" y="${y + 3}" width="3" height="7" fill="${i % 2 ? '#fff' : L}" stroke="${L}"/>`;
  if (kind === 2) return `<path d="M${x + 5} ${y}v14M${x + 3.5} ${y}h3M${x + 3.5} ${y + 14}h3" stroke="${L}" fill="none"/>` + r(x + 2.5, y + 7, 5, 1.2, Y) + r(x + 2.5, y + 9, 5, 1.4, B);
  return `<path d="M${x + 1} ${y}v17M${x - .5} ${y}h3M${x - .5} ${y + 17}h3" stroke="${O}" fill="none"/><rect x="${x - 1}" y="${y + 2}" width="4.500" height="5" fill="${i % 2 ? '#fff' : L}" stroke="${L}"/><rect x="${x - 1}" y="${y + 9}" width="4.500" height="5" fill="${i % 2 ? L : '#fff'}" stroke="${L}"/>`;
}).join('');
const gallery = [
  ['Column', 39, 51, [
    stack([9, 13, 10, 18, 15], [22, 22, 22, 22, 22], 22, B, B) + base(27, '#aaa') + stack([40, 33, 39, 35, 41], [47, 47, 47, 47, 47], 47, B, B),
    stack([8, 13, 10, 18, 15], [13.5, 19, 14.5, 21, 20], 22, O, '#b0b0b0') + base(27, '#aaa') + stack([37, 39, 36, 33, 36], [42, 44.5, 39.5, 40, 42], 47, O, '#b0b0b0'),
    stack([9, 9, 9, 9, 9], [16, 19, 18, 14, 12], 22, L, G) + base(27, '#aaa') + stack([33, 33, 33, 33, 33], [39, 42, 45, 42, 40], 47, L, G)]],
  ['Line', 20, 32, [
    ln('M3 24L11 19.700 16 23 23.500 16.300 31 20.300 39 11.500') + base(28) + ln('M3 43L9.500 39 15 42.700 23 39 31 42 39 34.500'),
    ln('M3 24Q6 20 10 21 14 14 20 15T30 20Q35 20 40 14') + base(28) + ln('M3 42Q6 39 10 40 14 35 20 35T30 39Q35 39 39 36'),
    ln('M3 25H9V20H15V22H20V16H27V13H32V22H38') + base(28) + ln('M3 43H10V39H18V37H25V32H31V43H38'),
    axes + pts([[10, 18], [17.5, 24.5], [25, 15], [33, 20.3], [40, 14.5]]) + pts([[10, 34], [17.5, 40], [25, 32], [33, 37], [40, 31]]),
    axes + pts([[8, 21], [16, 21], [23.5, 15], [32, 21], [40, 14.5]], 1) + pts([[8, 39], [16, 39], [23.5, 33], [32, 39], [40, 32]], 1)]],
  ['Area', 22, 34, [
    twice(poly(mount, Y), 22) + base(27),
    twice(poly(smooth, G), 22) + base(27),
    twice(poly('M1 24V19L7 9.700 14.500 17 27 9 41 14V24z', L) + poly('M1 24V21L8 16.500 15 22.500 26 13 41 20V24z', '#fdd08a'), 22) + base(27),
    twice(r(1, 9, 40, 15, L) + poly('M1 24V21L8 17 15 21 27 13 41 19V24z', G), 22) + base(27)]],
  ['Shape', 31, 43, [half(pie(L, Y)), half(split), half(pie3), half(pie4), half(ring), half(ring2)]],
  ['Range', 32, 44, [
    stems([16, 14, 13, 12, 12], 0) + base(28) + stems([34, 31, 35, 31, 34], 0),
    `<g transform="translate(-1 0)">${stems([15, 14, 13, 12, 12], 1)}</g>` + base(28) + `<g transform="translate(-1 0)">${stems([33, 32, 34, 30, 34], 1)}</g>`,
    `<g transform="translate(-1 0)">${stems([13, 12, 10, 9, 9], 2)}</g>` + base(28) + `<g transform="translate(-1 0)">${stems([31, 31, 33, 30, 33], 2)}</g>`,
    stems([11, 9, 12, 10, 9], 3) + base(28) + stems([32, 31, 33, 30, 32], 3)]],
];
document.getElementById('gallery').innerHTML = gallery.map(([name, w, lw, tiles], s) => `<div class="h-[80px]">
  <div class="h-[23px]"><div class="h-[23px] bg-[#f4f4f4] pl-[5px] leading-[22px]" style="width:${lw}px">${t(name, w)}</div></div>
  <div class="flex pl-[3px] pt-[2px]">${tiles.map((svg, i) => `<div class="${s + i === 0 ? 'w-[52px] mr-[3px] pl-[5px] h-[53px] bg-[#fff6a3] border-t border-[#f0c000]' : 'w-[55px] pl-[5px]'}"><svg class="block w-[42px] h-[54px]" viewBox="0 0 42 54">${svg}</svg></div>`).join('')}</div>
</div>`).join('');

/* Letter-spacing that brings each label to its designed width */
function fit() {
  const board = document.getElementById('board').getBoundingClientRect().width;
  const scale = board / 4650;
  const items = $$('[data-w]');
  items.forEach(e => e.style.letterSpacing = '0px');
  const range = document.createRange();
  const widths = items.map(e => { range.selectNodeContents(e); return range.getBoundingClientRect().width / scale; });
  items.forEach((e, i) => e.style.letterSpacing = ((+e.dataset.w - widths[i]) / e.textContent.length).toFixed(3) + 'px');
}
fit();
addEventListener('load', () => { fit(); requestAnimationFrame(fit); setTimeout(fit, 60); });
document.fonts.ready.then(fit);
</script>
</body>
</html>
